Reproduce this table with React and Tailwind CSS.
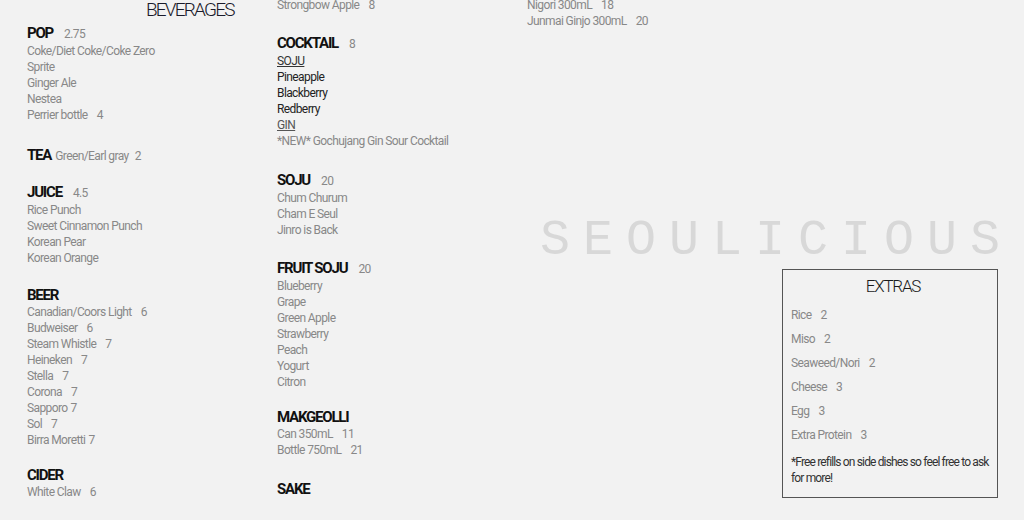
const col1 = [
  { title: 'POP', price: '2.75', mt: 'mt-[4px]', items: [['Coke/Diet Coke/Coke Zero'], ['Sprite'], ['Ginger Ale'], ['Nestea'], ['Perrier bottle', '4']] },
  { title: 'TEA', inline: 'Green/Earl gray', inlinePrice: '2', mt: 'mt-[23px]', items: [] },
  { title: 'JUICE', price: '4.5', mt: 'mt-[18px]', items: [['Rice Punch'], ['Sweet Cinnamon Punch'], ['Korean Pear'], ['Korean Orange']] },
  {
    title: 'BEER', mt: 'mt-[20px]',
    items: [['Canadian/Coors Light', '6'], ['Budweiser', '6'], ['Steam Whistle', '7'], ['Heineken', '7'], ['Stella', '7'], ['Corona', '7'], ['Sapporo', '7', true], ['Sol', '7'], ['Birra Moretti', '7', true]],
  },
  { title: 'CIDER', mt: 'mt-[18px]', items: [['White Claw', '6']] },
]

const col2 = [
  { title: 'FRUIT SOJU', price: '20', mt: 'mt-[21px]', items: [['Blueberry'], ['Grape'], ['Green Apple'], ['Strawberry'], ['Peach'], ['Yogurt'], ['Citron']] },
  { title: 'MAKGEOLLI', mt: 'mt-[18px]', items: [['Can 350mL', '11'], ['Bottle 750mL', '21']] },
  { title: 'SAKE', mt: 'mt-[22px]', items: [] },
]

const extras = [['Rice', '2'], ['Miso', '2'], ['Seaweed/Nori', '2'], ['Cheese', '3'], ['Egg', '3'], ['Extra Protein', '3']]

function Item({ name, price, tight }) {
  return (
    <div className="leading-[16px] text-[12px] tracking-[-0.6px] text-[#888] whitespace-nowrap">
      {name}
      {price && <span className={tight ? 'ml-[3px]' : 'ml-[9px]'}>{price}</span>}
    </div>
  )
}

function Heading({ title, price, children }) {
  return (
    <div className="leading-[18px] text-[15px] font-bold tracking-[-1.2px] text-[#111] whitespace-nowrap">
      {title}
      {price && <span className="ml-[11px] text-[12px] font-normal tracking-[-0.6px] text-[#888]">{price}</span>}
      {children}
    </div>
  )
}

function Section({ s }) {
  return (
    <div className={s.mt}>
      <Heading title={s.title} price={s.price}>
        {s.inline && (
          <span className="ml-[4px] text-[12px] font-normal tracking-[-0.6px] text-[#888]">
            {s.inline}<span className="ml-[6px]">{s.inlinePrice}</span>
          </span>
        )}
      </Heading>
      {s.items.map(([n, p, t]) => <Item key={n} name={n} price={p} tight={t} />)}
    </div>
  )
}

export default function App() {
  return (
    <div className="w-[1024px] h-[520px] overflow-hidden bg-[#f2f2f2] flex font-['Roboto','Liberation_Sans',sans-serif]">

      {/* colonne 1 */}
      <div className="w-[277px] pl-[27px] shrink-0">
        <div className="leading-[20px] text-[19px] font-light text-[#1a1a2a] pl-[119px] tracking-[-1.8px]">BEVERAGES</div>
        {col1.map(s => <Section key={s.title} s={s} />)}
      </div>

      {/* colonne 2 */}
      <div className="w-[250px] shrink-0">
        <div className="-mt-[3px]"><Item name="Strongbow Apple" price="8" /></div>

        <div className="mt-[21px]">
          <Heading title="COCKTAIL" price="8" />
          <div className="leading-[16px] text-[12px] tracking-[-0.6px] text-[#333] underline">SOJU</div>
          <div className="leading-[16px] text-[12px] tracking-[-0.6px] text-[#222]">Pineapple</div>
          <div className="leading-[16px] text-[12px] tracking-[-0.6px] text-[#222]">Blackberry</div>
          <div className="leading-[16px] text-[12px] tracking-[-0.6px] text-[#222]">Redberry</div>
          <div className="leading-[16px] text-[12px] tracking-[-0.6px] text-[#555] underline">GIN</div>
          <Item name="*NEW* Gochujang Gin Sour Cocktail" />
        </div>

        <div className="mt-[22px]">
          <Heading title="SOJU" price="20" />
          <Item name="Chum Churum" />
          <Item name="Cham E Seul" />
          <Item name="Jinro is Back" />
        </div>

        {col2.map(s => <Section key={s.title} s={s} />)}
      </div>

      {/* colonne 3 */}
      <div className="flex-1 flex flex-col">
        <div className="-mt-[3px]">
          <Item name="Nigori 300mL" price="18" />
          <Item name="Junmai Ginjo 300mL" price="20" />
        </div>

        <div className="mt-[186px] ml-[13px] leading-[52px] text-[50px] text-[#d8d8d8] tracking-[13px] whitespace-nowrap font-['Liberation_Mono',monospace]">
          SEOULICIOUS
        </div>

        <div className="mt-[2px] self-end mr-[26px] w-[216px] border border-[#555] pl-[8px] pr-[2px] pt-[6px] pb-[11px]">
          <div className="text-center leading-[20px] text-[17px] font-light tracking-[-1.2px] text-[#1a1a1a]">EXTRAS</div>
          <div className="mt-[7px]">
            {extras.map(([n, p]) => (
              <div key={n} className="leading-[24px] text-[12px] tracking-[-0.6px] text-[#888]">
                {n}<span className="ml-[9px]">{p}</span>
              </div>
            ))}
          </div>
          <p className="mt-[7px] leading-[16px] text-[12px] tracking-[-0.85px] text-[#333]">
            *Free refills on side dishes so feel free to ask for more!
          </p>
        </div>
      </div>
    </div>
  )
}
